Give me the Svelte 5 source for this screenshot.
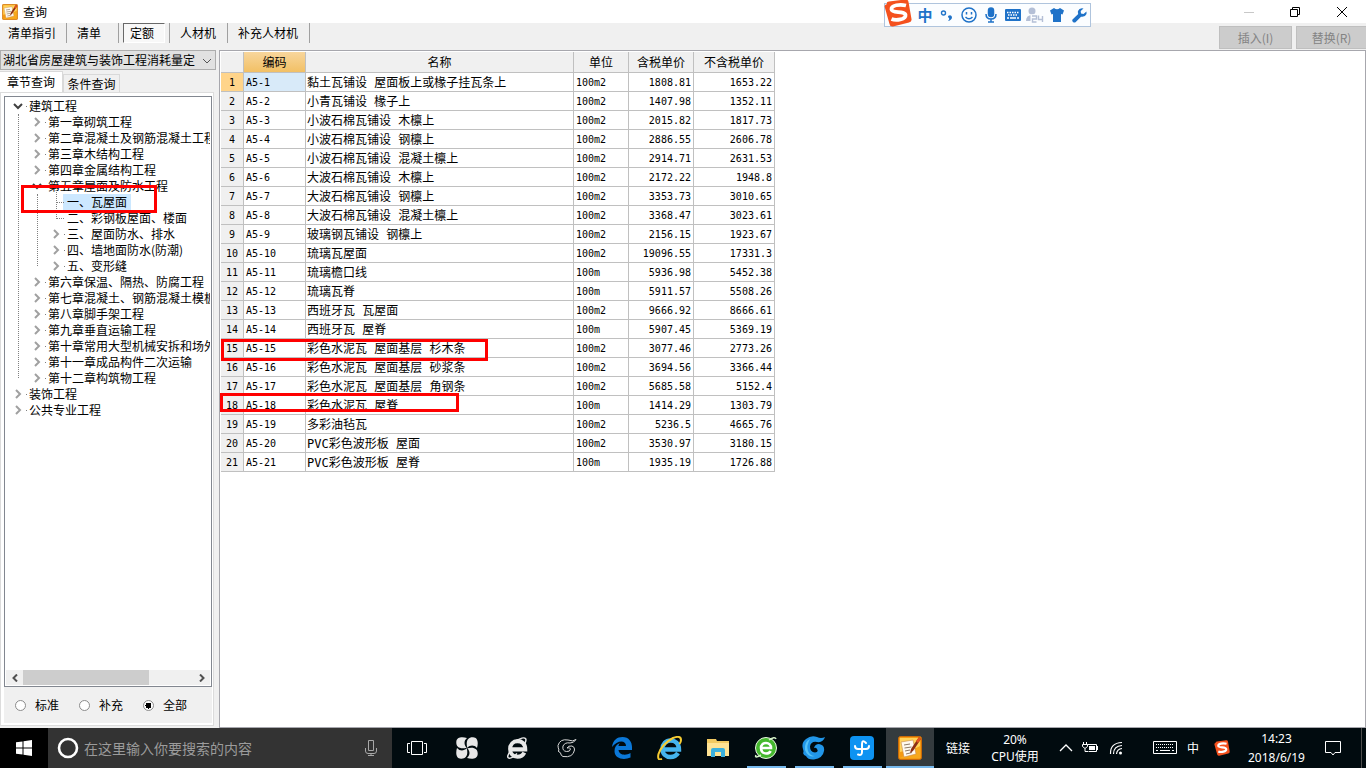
<script lang="ts">
	interface TreeNode {
		label: string;
		open?: boolean;
		children?: TreeNode[];
	}

	const modes = ['清单指引', '清单', '定额', '人材机', '补充人材机'];
	let mode = $state('定额');

	const panels = ['章节查询', '条件查询'];
	let panel = $state('章节查询');

	const scopes = ['标准', '补充', '全部'];
	let scope = $state('全部');

	let selected = $state('一、瓦屋面');
	let current = $state(0);

	const chapter = (label: string): TreeNode => ({ label, children: [] });

	let tree: TreeNode[] = $state([
		{
			label: '建筑工程',
			open: true,
			children: [
				chapter('第一章砌筑工程'),
				chapter('第二章混凝土及钢筋混凝土工程'),
				chapter('第三章木结构工程'),
				chapter('第四章金属结构工程'),
				{
					label: '第五章屋面及防水工程',
					open: true,
					children: [
						{ label: '一、瓦屋面' },
						{ label: '二、彩钢板屋面、楼面' },
						chapter('三、屋面防水、排水'),
						chapter('四、墙地面防水(防潮)'),
						chapter('五、变形缝')
					]
				},
				chapter('第六章保温、隔热、防腐工程'),
				chapter('第七章混凝土、钢筋混凝土模板'),
				chapter('第八章脚手架工程'),
				chapter('第九章垂直运输工程'),
				chapter('第十章常用大型机械安拆和场外'),
				chapter('第十一章成品构件二次运输'),
				chapter('第十二章构筑物工程')
			]
		},
		chapter('装饰工程'),
		chapter('公共专业工程')
	]);

	// name, unit, price with tax, price without tax
	const rows = [
		['黏土瓦铺设 屋面板上或椽子挂瓦条上', '100m2', '1808.81', '1653.22'],
		['小青瓦铺设 椽子上', '100m2', '1407.98', '1352.11'],
		['小波石棉瓦铺设 木檩上', '100m2', '2015.82', '1817.73'],
		['小波石棉瓦铺设 钢檩上', '100m2', '2886.55', '2606.78'],
		['小波石棉瓦铺设 混凝土檩上', '100m2', '2914.71', '2631.53'],
		['大波石棉瓦铺设 木檩上', '100m2', '2172.22', '1948.8'],
		['大波石棉瓦铺设 钢檩上', '100m2', '3353.73', '3010.65'],
		['大波石棉瓦铺设 混凝土檩上', '100m2', '3368.47', '3023.61'],
		['玻璃钢瓦铺设 钢檩上', '100m2', '2156.15', '1923.67'],
		['琉璃瓦屋面', '100m2', '19096.55', '17331.3'],
		['琉璃檐口线', '100m', '5936.98', '5452.38'],
		['琉璃瓦脊', '100m', '5911.57', '5508.26'],
		['西班牙瓦 瓦屋面', '100m2', '9666.92', '8666.61'],
		['西班牙瓦 屋脊', '100m', '5907.45', '5369.19'],
		['彩色水泥瓦 屋面基层 杉木条', '100m2', '3077.46', '2773.26'],
		['彩色水泥瓦 屋面基层 砂浆条', '100m2', '3694.56', '3366.44'],
		['彩色水泥瓦 屋面基层 角钢条', '100m2', '5685.58', '5152.4'],
		['彩色水泥瓦 屋脊', '100m', '1414.29', '1303.79'],
		['多彩油毡瓦', '100m2', '5236.5', '4665.76'],
		['PVC彩色波形板 屋面', '100m2', '3530.97', '3180.15'],
		['PVC彩色波形板 屋脊', '100m', '1935.19', '1726.88']
	];

	function pick(node: TreeNode) {
		selected = node.label;
		if (node.children) node.open = !node.open;
	}
</script>

{#snippet notepad(size: number)}
	<svg width={size} height={size} viewBox="0 0 24 24" aria-hidden="true">
		<rect x="0.5" y="0.5" width="23" height="23" rx="2" fill="#f59a12" stroke="#c96a08" />
		<path d="M2 2h20v9L2 16z" fill="#ffd35a" />
		<path d="M2 22h20V10z" fill="#f7a81c" />
		<path d="M3 6l12-2 3 14-12 3z" fill="#fffaf0" stroke="#c98a4a" stroke-width="0.6" />
		<path d="M6 9l6-1M6.5 12l7-1M7 15l5-1M8 18l6-1.500" stroke="#8d7a68" stroke-width="1" />
		<path d="M21 1l-8 12-1 4 3-2 8-12z" fill="#8c2f12" />
		<path d="M21 1l2 2-3 4-2-2z" fill="#e4511e" />
	</svg>
{/snippet}

{#snippet sogou(size: number)}
	<svg width={size} height={size} viewBox="0 0 28 28" aria-hidden="true">
		<path d="M3 5Q2 3 5 2.500L21 0.500Q24 0 24.500 3L27.500 20Q28 23 25 23.500L9 27.500Q6 28 5.500 25L0.700 8Q0 6 3 5z" fill="#f4511e" />
		<path
			d="M22 6.500C16 5 7 6 7.500 10.500C8 14.500 21 11.500 21.500 16C22 20.500 12 22 7.500 20"
			fill="none"
			stroke="#fff"
			stroke-width="3.800"
		/>
	</svg>
{/snippet}

{#snippet branch(nodes: TreeNode[])}
	<ul>
		{#each nodes as node (node.label)}
			<li class:leaf={!node.children}>
				<button class="node" class:selected={selected === node.label} onclick={() => pick(node)}>
					<span class="twist">
						{#if node.children}
							<svg class:open={node.open} width="14" height="10" viewBox="0 0 14 10" aria-hidden="true">
								<path d={node.open ? 'M1 3l4 4 4-4' : 'M3 1l4 4-4 4'} />
								<rect x="13" y="5" width="1" height="1" fill="#808080" />
							</svg>
						{/if}
					</span>
					<span class="caption">{node.label}</span>
				</button>
				{#if node.open && node.children?.length}
					{@render branch(node.children)}
				{/if}
			</li>
		{/each}
	</ul>
{/snippet}

<div class="screen">
	<header class="titlebar">
		{@render notepad(16)}
		<h1>查询</h1>
		<div class="window-buttons">
			<button aria-label="最小化" class="dim">
				<svg width="12" height="12" viewBox="0 0 12 12"><path d="M1 6.500h10" /></svg>
			</button>
			<button aria-label="还原">
				<svg width="12" height="12" viewBox="0 0 12 12"><path d="M1.500 3.500h7v7h-7zM3.500 3.500v-2h7v7h-2" /></svg>
			</button>
			<button aria-label="关闭">
				<svg width="12" height="12" viewBox="0 0 12 12"><path d="M1 1l10 10M11 1L1 11" /></svg>
			</button>
		</div>
	</header>

	<div class="toolbar">
		<nav>
			{#each modes as item (item)}
				<span class="slot">
					<button class:pressed={mode === item} onclick={() => (mode = item)}>{item}</button>
				</span>
			{/each}
		</nav>
		<div class="actions">
			<button disabled>插入(I)</button>
			<button disabled>替换(R)</button>
		</div>
	</div>

	<main>
		<aside>
			<div class="combo">
				<select aria-label="定额库">
					<option>湖北省房屋建筑与装饰工程消耗量定</option>
				</select>
				<svg width="10" height="6" viewBox="0 0 10 6" aria-hidden="true"><path d="M1 1l4 4 4-4" /></svg>
			</div>

			<div class="tabs">
				{#each panels as item (item)}
					<button class:active={panel === item} onclick={() => (panel = item)}>{item}</button>
				{/each}
			</div>

			<div class="page">
				<div class="tree">
					<div class="nodes">{@render branch(tree)}</div>
					<div class="scroll">
						<button aria-label="向左">
							<svg width="8" height="8" viewBox="0 0 8 8"><path d="M6 0.500L2.500 4 6 7.500" /></svg>
						</button>
						<div class="track"><div class="thumb"></div></div>
						<button aria-label="向右">
							<svg width="8" height="8" viewBox="0 0 8 8"><path d="M2 0.500L5.500 4 2 7.500" /></svg>
						</button>
					</div>
					<div class="mark mark-tree"></div>
				</div>
				<div class="scopes">
					{#each scopes as item (item)}
						<label><input type="radio" name="scope" value={item} bind:group={scope} />{item}</label>
					{/each}
				</div>
			</div>
		</aside>

		<section>
			<table>
				<colgroup>
					<col class="c-no" />
					<col class="c-code" />
					<col class="c-name" />
					<col class="c-unit" />
					<col class="c-taxed" />
					<col class="c-net" />
				</colgroup>
				<thead>
					<tr>
						<th></th>
						<th class="sorted">编码</th>
						<th>名称</th>
						<th>单位</th>
						<th>含税单价</th>
						<th>不含税单价</th>
					</tr>
				</thead>
				<tbody>
					{#each rows as [name, unit, taxed, net], i (i)}
						<tr class:current={current === i} onclick={() => (current = i)}>
							<th scope="row">{i + 1}</th>
							<td class="code">A5-{i + 1}</td>
							<td class="name">{name}</td>
							<td>{unit}</td>
							<td class="price">{taxed}</td>
							<td class="price">{net}</td>
						</tr>
					{/each}
				</tbody>
			</table>
			<div class="mark mark-cedar"></div>
			<div class="mark mark-ridge"></div>
		</section>
	</main>

	<footer>
		<button class="start" aria-label="开始">
			<svg width="16" height="16" viewBox="0 0 16 16">
				<path d="M0 2.300L6.500 1.400V7.500H0zM7.500 1.200L16 0v7.500H7.500zM0 8.500h6.500v6.100L0 13.700zM7.500 8.500H16V16l-8.500-1.200z" fill="#fff" />
			</svg>
		</button>
		<label class="search">
			<svg width="24" height="24" viewBox="0 0 24 24" aria-hidden="true">
				<circle cx="12" cy="12" r="9" fill="none" stroke="#fff" stroke-width="2.600" />
			</svg>
			<input type="text" placeholder="在这里输入你要搜索的内容" />
			<svg width="14" height="18" viewBox="0 0 14 18" fill="none" stroke="#a8a8a8" aria-hidden="true">
				<path d="M4.500 1.500h5v10h-5zM1.500 9v3q0 2.500 2.500 2.500h6q2.500 0 2.500-2.500V9M7 14.500v2M4 16.500h6" />
			</svg>
		</label>

		<div class="pinned">
			<button aria-label="任务视图">
				<svg width="20" height="16" viewBox="0 0 20 16" fill="none" stroke="#fff">
					<path d="M4.500 1.500h11v13h-11zM3 3.500H0.500v9H3M17 3.500h2.500v9H17" />
				</svg>
			</button>
			<button aria-label="四叶草">
				<svg width="22" height="22" viewBox="0 0 22 22" fill="#e8e8e8">
					<path d="M10.700 10.700C4 12.500 0 10 0.300 5C0.500 0 6-0.500 11 1C7.500 4 8 8 10.700 10.700z" />
					<path d="M11.300 10.700C9.500 4 12 0 17 0.300C22 0.500 22.500 6 21 11C18 7.500 14 8 11.300 10.700z" />
					<path d="M11.300 11.300C18 9.500 22 12 21.700 17C21.500 22 16 22.500 11 21C14.500 18 14 14 11.300 11.300z" />
					<path d="M10.700 11.300C12.500 18 10 22 5 21.700C0 21.500-0.500 16 1 11C4 14.500 8 14 10.700 11.300z" />
				</svg>
			</button>
			<button aria-label="浏览器">
				<svg width="22" height="24" viewBox="0 0 24 24" fill="none" stroke="#e8e8e8">
					<path d="M6 13.500h15C21 7 17 4.500 12.500 4.500S4.500 8 4.500 13s3.500 8.500 8 8.500c3.500 0 6-1.500 7.500-4.500" stroke-width="4.400" />
					<path d="M5 15Q0 22 3 23Q6 24 12 18M10 5Q19-1 21.500 2Q22.500 4 20 8" stroke-width="1.600" />
				</svg>
			</button>
			<button aria-label="云龙">
				<svg width="20" height="20" viewBox="0 0 20 20" fill="none" stroke="#d8d8d8" stroke-width="1">
					<path d="M19 1.500Q16 4 11 2Q3 0.500 1 7.500Q1 10 2 12Q0.500 13 2 14Q3 14 3.500 15Q4 18 6 18.500Q16 20 17.500 12Q18 9 15 8Q11 7.500 10 10Q13 9 13.500 11Q13 14 9.500 13.500Q5 13 6 8Q8 4 13 5Q17 5 19 1.500z" />
				</svg>
			</button>
		</div>

		<div class="apps">
			<button aria-label="Edge">
				<svg width="20" height="22" viewBox="0 0 20 22">
					<path d="M0 10C1 3 5 0 10.500 0C17 0 20 5 20 10v3H6.500c0.500 5 7 6 12 3v4.500C12 23.500 2.500 22 2.500 14C2.500 10 4.500 7.500 8 6C6.500 7.500 6.500 9 6.500 9H14C14 2.500 5 3 0 10z" fill="#0b78d8" />
				</svg>
			</button>
			<button aria-label="Internet Explorer">
				<svg width="26" height="24" viewBox="0 0 26 24" fill="none">
					<path d="M7 13.500h15C22 7 18 4.500 13.500 4.500S5.500 8 5.500 13s3.500 8 8 8c3.500 0 6-1.500 7.500-4" stroke="#45b4ee" stroke-width="4.400" />
					<path d="M5 23Q0 25 1.500 18Q5 8 16 2Q24-1 24 4Q24 6 22.500 8" stroke="#f6cc33" stroke-width="2" />
				</svg>
			</button>
			<button aria-label="文件资源管理器">
				<svg width="22" height="20" viewBox="0 0 22 20">
					<path d="M0 1h9l1 2h12v15H0z" fill="#f2ca62" />
					<path d="M0 5h22v13H0z" fill="#ffe394" />
					<path d="M4 19v-7q0-2 2-2h10q2 0 2 2v7h-4v-5H8v5z" fill="#3cb0dc" />
				</svg>
			</button>
			<button aria-label="安全浏览器" class="running">
				<svg width="24" height="24" viewBox="0 0 24 24" fill="none">
					<circle cx="12" cy="12" r="10.500" fill="#45b82e" stroke="#e9f8e2" />
					<path d="M7 12h10c0-3-2-5-5-5s-5 2-5 5 2 5.500 5 5.500c2 0 4-1 4.500-2.500" stroke="#fff" stroke-width="2.600" />
					<path d="M2 19Q0 23 7 19M15 4Q21 0 22 3" stroke="#d5f3c8" stroke-width="1.500" />
				</svg>
			</button>
			<button aria-label="云计价" class="running">
				<svg width="24" height="24" viewBox="0 0 24 24">
					<path d="M23 1Q21 7 15 6Q9 5 8 10.500Q8 16 13 16.500Q17 16 15 13Q14 11 12 12Q13 8 17 8Q23 9 22 15Q21 22 12 23.500Q6 24 4 20Q2 20 1 17Q2 16 1 13Q-1 7 4 3Q9-1 15 1Q19 3 23 1z" fill="#2196e8" />
					<path d="M3 14Q2 6 8 3Q4 10 6 15Q8 20 13 20Q6 22 3 14z" fill="#56c3f7" />
				</svg>
			</button>
			<button aria-label="云助手" class="running">
				<svg width="24" height="24" viewBox="0 0 24 24" fill="none">
					<rect width="24" height="24" rx="4" fill="#0d93f2" />
					<path d="M16 7Q12 3 12 8v8q0 4-4 2.500M5 10q0 3 3 3h8q3 0 3-3" stroke="#fff" stroke-width="2" stroke-linecap="round" />
				</svg>
			</button>
			<button aria-label="查询" class="running focused">{@render notepad(24)}</button>
		</div>

		<div class="tray">
			<span class="links">链接</span>
			<span class="cpu">20%<br />CPU使用</span>
			<button class="w-chev" aria-label="显示隐藏的图标">
				<svg width="14" height="8" viewBox="0 0 14 8"><path d="M1 7l6-6 6 6" stroke-width="1.300" /></svg>
			</button>
			<button class="w-icon" aria-label="电池">
				<svg width="17" height="14" viewBox="0 0 17 14">
					<path d="M5.500 3.500h9v7h-8M15.500 5v4M1.500 1v3M4.500 1v3M0.500 3.500h5v2L3 7.500L0.500 5.500zM3 7.500v3h3" />
					<rect x="7" y="5" width="6" height="4" fill="#fff" />
				</svg>
			</button>
			<button class="w-icon" aria-label="网络">
				<svg width="14" height="14" viewBox="0 0 14 14">
					<path d="M1.500 13Q1 2 13 1.500M4.500 13Q4.500 5 13 4.500M7.500 13Q8 8 13 7.500" stroke-width="1.200" />
					<circle cx="11.500" cy="12" r="1.500" fill="#fff" />
				</svg>
			</button>
			<button class="w-keys" aria-label="触摸键盘">
				<svg width="24" height="14" viewBox="0 0 24 14">
					<path d="M0.500 0.500h23v12h-23z" />
					<path d="M3 3.500h18M3 6.500h18" stroke-dasharray="1 1" />
					<path d="M3 9.500h2M7 9.500h10M19 9.500h2" />
				</svg>
			</button>
			<button class="w-lang">中</button>
			<button class="w-sogou" aria-label="搜狗输入法">{@render sogou(16)}</button>
			<span class="clock">14:23<br />2018/6/19</span>
			<button class="notes" aria-label="操作中心">
				<svg width="16" height="16" viewBox="0 0 16 16"><path d="M0.500 1.500h15v11H10l-2 2.500-2-2.500H0.500z" /></svg>
			</button>
			<span class="peek"></span>
		</div>
	</footer>

	<div class="ime">
		<span class="logo">{@render sogou(28)}</span>
		<button class="zh">中</button>
		<button aria-label="标点">
			<svg width="14" height="14" viewBox="0 0 14 14">
				<circle cx="3.500" cy="5" r="2" fill="none" stroke="#1f72c8" stroke-width="1.400" />
				<path d="M8 8q3-2 4 1q0 3-4 4q2-2 1-3q-1 0-1-2z" fill="#1f72c8" />
			</svg>
		</button>
		<button aria-label="表情">
			<svg width="16" height="16" viewBox="0 0 16 16" fill="none" stroke="#1f72c8" stroke-width="1.500">
				<circle cx="8" cy="8" r="7" />
				<path d="M5.500 5v2.500M10.500 5v2.500M4.500 10q3.500 3.500 7 0" />
			</svg>
		</button>
		<button aria-label="语音">
			<svg width="12" height="16" viewBox="0 0 12 16" fill="none" stroke="#1f72c8" stroke-width="1.500">
				<rect x="3.500" y="1" width="5" height="8.500" rx="2.500" fill="#1f72c8" />
				<path d="M1 7q0 5 5 5t5-5M6 12v3M3 15h6" />
			</svg>
		</button>
		<button aria-label="软键盘">
			<svg width="16" height="12" viewBox="0 0 16 12">
				<rect width="16" height="12" rx="1" fill="#1f72c8" />
				<path d="M2 3.500h12M3 6h10" stroke="#fff" stroke-width="1.500" stroke-dasharray="1.500 1" />
				<path d="M2 9h2M5 9h6M12 9h2" stroke="#fff" stroke-width="1.500" />
			</svg>
		</button>
		<button aria-label="登录">
			<svg width="18" height="16" viewBox="0 0 18 16">
				<circle cx="6" cy="4" r="3.500" fill="#b4bfd6" />
				<path d="M0 14q0-6 6-6q4 0 5 2v4z" fill="#b4bfd6" />
				<rect x="4.500" y="7.500" width="13.500" height="8" fill="#fbfdff" />
				<path d="M6 9h4.500v3H6.500v3h4M12.500 8.500V12.500h4.500M16.500 9v6" fill="none" stroke="#b4bfd6" stroke-width="1.400" />
			</svg>
		</button>
		<button aria-label="皮肤">
			<svg width="14" height="14" viewBox="0 0 14 14">
				<path d="M4 0q3 2.500 6 0l4 2.500-1.500 4-1.500-0.500V14H3V6l-1.500 0.500L0 2.500z" fill="#1f72c8" />
			</svg>
		</button>
		<button aria-label="工具">
			<svg width="15" height="15" viewBox="0 0 15 15">
				<path d="M14.500 3.500L11.500 6 9 5.500 8.700 3 11.500 0.500Q7.500-0.500 6 3Q5.700 4.500 6.200 6L0.500 11.500Q-0.200 13 1 14T3.500 14.300L9 8.700Q13 9.500 14.500 6z" fill="#1f72c8" />
			</svg>
		</button>
	</div>
</div>

<style>
	:global(body) {
		overflow: hidden;
	}

	.screen {
		position: relative;
		display: flex;
		flex-direction: column;
		height: 100vh;
		background: #f0f0f0;
		color: #000;
		font: 12px/16px 'Noto Sans CJK SC', sans-serif;
	}

	button {
		display: flex;
		align-items: center;
		justify-content: center;
		margin: 0;
		padding: 0;
		border: 0;
		background: none;
		color: inherit;
		font: inherit;
		white-space: nowrap;
	}

	svg {
		display: block;
		flex: none;
	}

	.titlebar {
		display: flex;
		align-items: center;
		height: 23px;
		padding-left: 2px;
		background: #fff;
	}

	h1 {
		margin: 0 0 0 5px;
		font: inherit;
	}

	.window-buttons {
		display: flex;
		margin-left: auto;
	}

	.window-buttons button {
		width: 46px;
		height: 20px;
	}

	.window-buttons button:last-child {
		width: 48px;
	}

	.window-buttons path {
		fill: none;
		stroke: #000;
	}

	.window-buttons .dim path {
		stroke: #c8c8c8;
	}

	.toolbar {
		display: flex;
		justify-content: space-between;
		height: 27px;
	}

	nav {
		display: flex;
		height: 20px;
	}

	.slot {
		display: flex;
		padding: 0 4px;
		border-right: 1px solid #a0a0a0;
	}

	.slot button {
		padding: 0 7px 0 6px;
	}

	.slot:first-child {
		padding: 0 3px 0 2px;
	}

	.slot:nth-child(2) {
		padding-right: 10px;
	}

	.slot .pressed {
		padding-right: 10px;
		border: 1px solid;
		border-color: #696969 #fff #fff #696969;
		background: #f8f8f8;
	}

	.actions {
		display: flex;
		gap: 4px;
		padding-top: 3px;
	}

	.actions button {
		width: 73px;
		height: 23px;
		border: 1px solid #bfbfbf;
		background: #ccc;
		color: #838383;
	}

	.actions button:last-child {
		width: 70px;
		border-right: 0;
	}

	main {
		display: flex;
		flex: 1;
		min-height: 0;
	}

	aside {
		display: flex;
		flex-direction: column;
		width: 219px;
		flex: none;
	}

	.combo {
		position: relative;
		margin-right: 3px;
	}

	.combo select {
		display: block;
		width: 100%;
		height: 20px;
		padding: 0 18px 0 2px;
		border: 1px solid #adadad;
		border-radius: 0;
		appearance: none;
		background: #e1e1e1;
		color: inherit;
		font: inherit;
	}

	.combo svg {
		position: absolute;
		top: 8px;
		right: 4px;
		fill: none;
		stroke: #555;
	}

	.tabs {
		display: flex;
		align-items: flex-end;
		height: 21px;
		padding-top: 1px;
	}

	.tabs button {
		width: 57px;
		height: 18px;
		border: 1px solid #d9d9d9;
		border-bottom: 0;
	}

	.tabs .active {
		width: 63px;
		height: 21px;
		border-left: 0;
		background: #fff;
	}

	.page {
		display: flex;
		flex: 1;
		flex-direction: column;
		min-height: 0;
		margin: 0 5px 2px 0;
		padding: 3px 1px 2px 3px;
		border: 1px solid #dcdcdc;
		background: #fff;
	}

	.tree {
		position: relative;
		display: flex;
		flex: 1;
		flex-direction: column;
		min-height: 0;
		border: 1px solid #828790;
		background: #fff;
	}

	.nodes {
		flex: 1;
		min-height: 0;
		margin-right: 1px;
		padding-top: 1px;
		overflow: hidden;
	}

	ul {
		position: relative;
		margin: 0;
		padding: 0;
		list-style: none;
	}

	li {
		position: relative;
	}

	li ul {
		margin-left: 19px;
	}

	li ul::before {
		content: '';
		position: absolute;
		top: 0;
		bottom: 8px;
		left: -6px;
		border-left: 1px dotted #808080;
	}

	.leaf::before {
		content: '';
		position: absolute;
		top: -8px;
		left: 13px;
		width: 7px;
		height: 16px;
		border: dotted #808080;
		border-width: 0 0 1px 1px;
	}

	.node {
		justify-content: flex-start;
		height: 16px;
	}

	.twist {
		width: 20px;
		padding-left: 8px;
		box-sizing: border-box;
	}

	.twist path {
		fill: none;
		stroke: #a0a0a0;
		stroke-width: 2;
	}

	.twist .open path {
		stroke: #404040;
	}

	.caption {
		padding: 0 4px;
	}

	.selected .caption {
		background: #cce8ff;
	}

	.scroll {
		display: flex;
		height: 15px;
		margin: 1px;
		background: #f0f0f0;
	}

	.scroll button {
		width: 17px;
	}

	.scroll path {
		fill: none;
		stroke: #505050;
		stroke-width: 2;
	}

	.track {
		flex: 1;
	}

	.thumb {
		width: 74%;
		height: 100%;
		background: #cdcdcd;
	}

	.scopes {
		display: flex;
		height: 36px;
		padding-left: 11px;
		background: #f0f0f0;
	}

	.scopes label {
		display: flex;
		align-items: center;
		gap: 9px;
		width: 64px;
	}

	.scopes input {
		width: 11px;
		height: 11px;
		margin: 0;
		border: 1px solid #8c8c8c;
		border-radius: 50%;
		appearance: none;
		background: #fff;
	}

	.scopes input:checked {
		background: radial-gradient(circle, #000 3px, #fff 3px);
	}

	section {
		position: relative;
		flex: 1;
		min-width: 0;
		padding: 1px 0 0 1px;
		border: 1px solid #a7a7ad;
		background: #fff;
	}

	table {
		width: 554px;
		border-spacing: 0;
		table-layout: fixed;
		font: 10px/16px 'DejaVu Sans Mono', monospace;
	}

	.c-no {
		width: 23px;
	}

	.c-code {
		width: 62px;
	}

	.c-name {
		width: 268px;
	}

	.c-unit {
		width: 55px;
	}

	.c-taxed {
		width: 65px;
	}

	.c-net {
		width: 81px;
	}

	th,
	td {
		box-sizing: border-box;
		height: 19px;
		padding: 2px 2px 0;
		overflow: hidden;
		border: solid #c0c0c0;
		border-width: 0 1px 1px 0;
		text-align: left;
		white-space: nowrap;
	}

	th {
		padding: 2px 0 0;
		background: #f0f0f0;
		font-weight: normal;
		text-align: center;
	}

	thead th {
		height: 21px;
		padding: 0;
		font: 12px/16px 'Noto Sans CJK SC', sans-serif;
	}

	.sorted {
		background: linear-gradient(#f8d69c, #f2c065);
	}

	.current th {
		background: #ffd48a;
	}

	.current .code {
		background: #d8eaf9;
	}

	.name {
		padding-left: 1px;
		font: 12px/16px 'DejaVu Sans Mono', 'Noto Sans CJK SC', monospace;
	}

	.price {
		text-align: right;
	}

	.mark {
		position: absolute;
		box-sizing: border-box;
		border: 3px solid #f00;
		pointer-events: none;
	}

	.mark-tree {
		top: 88px;
		left: 16px;
		width: 136px;
		height: 28px;
	}

	.mark-cedar {
		top: 288px;
		left: 1px;
		width: 267px;
		height: 22px;
	}

	.mark-ridge {
		top: 342px;
		left: 0;
		width: 239px;
		height: 19px;
	}

	footer {
		display: flex;
		height: 40px;
		flex: none;
		background: #010b0f;
		color: #fff;
		font: 12px/17px 'Noto Sans', 'Noto Sans CJK SC', sans-serif;
	}

	.start {
		width: 48px;
		background: #000;
	}

	.search {
		display: flex;
		align-items: center;
		width: 344px;
		padding: 0 14px 0 8px;
		box-sizing: border-box;
		background: #333;
	}

	.search input {
		flex: 1;
		min-width: 0;
		padding: 0 4px;
		border: 0;
		background: none;
		color: #fff;
		font: 14px/20px 'Noto Sans CJK SC', sans-serif;
	}

	.search input::placeholder {
		color: #9b9b9b;
	}

	.pinned,
	.apps {
		display: flex;
	}

	.pinned button {
		width: 50px;
	}

	.apps {
		margin-left: 6px;
	}

	.apps button {
		position: relative;
		width: 48px;
	}

	.running::after {
		content: '';
		position: absolute;
		right: 4px;
		bottom: 0;
		left: 5px;
		height: 2px;
		background: #76b9ed;
	}

	.apps .focused {
		background: #343b3e;
	}

	.focused::after {
		right: 0;
		left: 0;
	}

	.tray {
		display: flex;
		align-items: center;
		margin-left: auto;
		text-align: center;
	}

	.tray button:not(.w-sogou) path {
		fill: none;
		stroke: #fff;
	}

	.links {
		width: 28px;
	}

	.cpu {
		width: 86px;
	}

	.tray button {
		height: 40px;
	}

	.w-chev {
		width: 16px;
	}

	.w-icon {
		width: 25px;
		margin-left: 4px;
	}

	.w-icon + .w-icon {
		margin: 0;
	}

	.w-keys {
		width: 26px;
		margin-left: 24px;
	}

	.w-lang {
		width: 30px;
	}

	.w-sogou {
		width: 28px;
	}

	.clock {
		width: 81px;
		line-height: 19px;
	}

	.notes {
		width: 32px;
	}

	.peek {
		height: 40px;
		width: 4px;
		margin-left: 12px;
		border-left: 1px solid #4d4d4d;
	}

	.ime {
		position: absolute;
		top: 3px;
		right: 275px;
		display: flex;
		align-items: center;
		box-sizing: border-box;
		height: 24px;
		padding: 0 0 0 29px;
		border: 1px solid #afc4dd;
		background: #fbfdff;
	}

	.ime .logo {
		position: absolute;
		top: -5px;
		left: -1px;
	}

	.ime button {
		width: 22px;
	}

	.ime .zh {
		color: #1f72c8;
		font-size: 15px;
		font-weight: bold;
	}
</style>
